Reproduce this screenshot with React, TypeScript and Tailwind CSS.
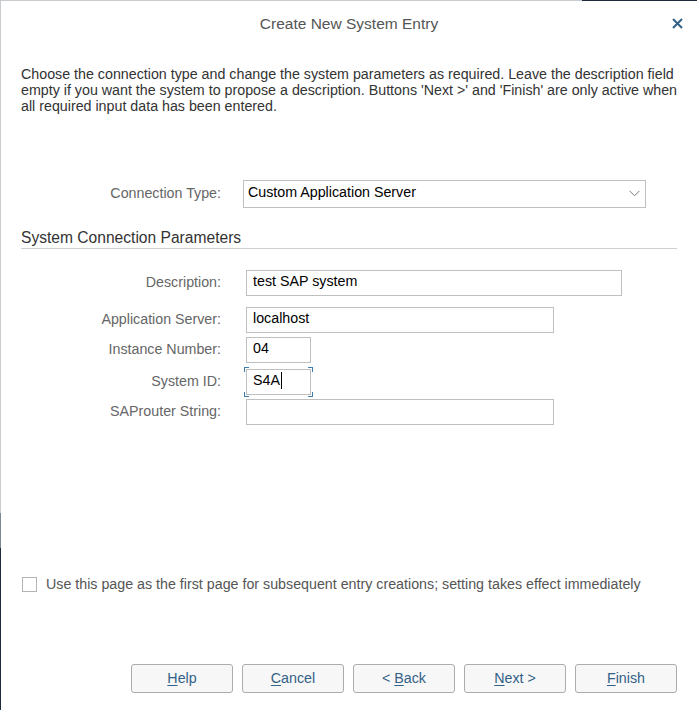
import React from 'react';

const font = { fontFamily: '"Liberation Sans", Arial, sans-serif' };

function Field({
  label,
  value,
  width,
  top,
  focused,
}: {
  label: string;
  value: string;
  width: string;
  top: string;
  focused?: boolean;
}) {
  return (
    <div className={`flex items-center ${top}`}>
      <div className="w-[221px] pr-px text-right text-[14.25px] text-[#666666]">{label}</div>
      <div className={`relative ml-[24px] ${width}`}>
        <div className="flex h-[26px] items-center border border-[#bfbfbf] bg-white px-[6px] pb-[3px] text-[14.25px] text-black">
          {value}
          {focused && <span className="ml-px inline-block h-[17px] w-px bg-black" />}
        </div>
        {focused && (
          <>
            <span className="absolute -left-[2px] -top-[2px] h-[5px] w-[5px] border-l border-t border-[#427cac]" />
            <span className="absolute -right-[2px] -top-[2px] h-[5px] w-[5px] border-r border-t border-[#427cac]" />
            <span className="absolute -bottom-[2px] -left-[2px] h-[5px] w-[5px] border-b border-l border-[#427cac]" />
            <span className="absolute -bottom-[2px] -right-[2px] h-[5px] w-[5px] border-b border-r border-[#427cac]" />
          </>
        )}
      </div>
    </div>
  );
}

function Btn({ first, rest, pre }: { first: string; rest: string; pre?: string }) {
  return (
    <button className="h-[29px] w-[102px] rounded-[3px] border border-[#acacac] bg-[#f7f7f7] text-[14.25px] text-[#346187]">
      {pre}
      <span className="underline underline-offset-2">{first}</span>
      {rest}
    </button>
  );
}

export default function App() {
  return (
    <div className="flex h-[710px] w-[697px] flex-col bg-white" style={font}>
      <div className="flex h-px">
        <div className="w-[582px] bg-[#c7ccd1]" />
        <div className="flex-1 bg-[#1d2d3e]" />
      </div>
      <div className="flex flex-1">
        <div className="flex w-px flex-col">
          <div className="h-[512px] bg-[#c7ccd1]" />
          <div className="h-[35px] bg-[#7f8790]" />
          <div className="flex-1 bg-[#1d2d3e]" />
        </div>
        <div className="flex flex-1 flex-col">
          <div className="relative flex h-[45px] items-center justify-center text-[15.5px] text-[#555555]">
            Create New System Entry
            <svg className="absolute right-[14px] top-[17px]" width="11" height="11" viewBox="0 0 11 11">
              <path d="M1 1L10 10M10 1L1 10" stroke="#346187" strokeWidth="2" />
            </svg>
          </div>

          <p className="mt-[20px] pl-[20px] pr-[10px] text-[14.25px] leading-[16px] text-[#333333]">
            Choose the connection type and change the system parameters as required. Leave the description field
            empty if you want the system to propose a description. Buttons 'Next &gt;' and 'Finish' are only active when
            all required input data has been entered.
          </p>

          <div className="mt-[66px] flex items-center">
            <div className="w-[220px] text-right text-[14.25px] text-[#666666]">Connection Type:</div>
            <div className="ml-[22px] flex h-[28px] w-[403px] items-center justify-between border border-[#bfbfbf] bg-white pb-[2px] pl-[4px] pr-[5px] text-[14.25px] text-black">
              Custom Application Server
              <svg width="11" height="7" viewBox="0 0 11 7">
                <path d="M0.5 0.8L5.5 5.8L10.5 0.8" stroke="#7a7a7a" fill="none" strokeWidth="1" />
              </svg>
            </div>
          </div>

          <div className="ml-[20px] mr-[20px] mt-[20px] h-[21px] border-b border-[#d0d0d0] text-[15.6px] leading-[20px] text-[#333333]">
            System Connection Parameters
          </div>

          <Field label="Description:" value="test SAP system" width="w-[376px]" top="mt-[21px]" />
          <Field label="Application Server:" value="localhost" width="w-[308px]" top="mt-[11px]" />
          <Field label="Instance Number:" value="04" width="w-[65px]" top="mt-[4px]" />
          <Field label="System ID:" value="S4A" width="w-[65px]" top="mt-[6px]" focused />
          <Field label="SAProuter String:" value="" width="w-[308px]" top="mt-[4px]" />

          <div className="mt-[149px] flex items-center pl-[21px]">
            <span className="h-[15px] w-[15px] border border-[#b3b3b3] bg-white" />
            <span className="ml-[9px] text-[14.25px] text-[#555555]">
              Use this page as the first page for subsequent entry creations; setting takes effect immediately
            </span>
          </div>

          <div className="mt-[69px] flex gap-[9px] pl-[130px]">
            <Btn first="H" rest="elp" />
            <Btn first="C" rest="ancel" />
            <Btn pre="< " first="B" rest="ack" />
            <Btn first="N" rest="ext >" />
            <Btn first="F" rest="inish" />
          </div>
        </div>
      </div>
    </div>
  );
}
